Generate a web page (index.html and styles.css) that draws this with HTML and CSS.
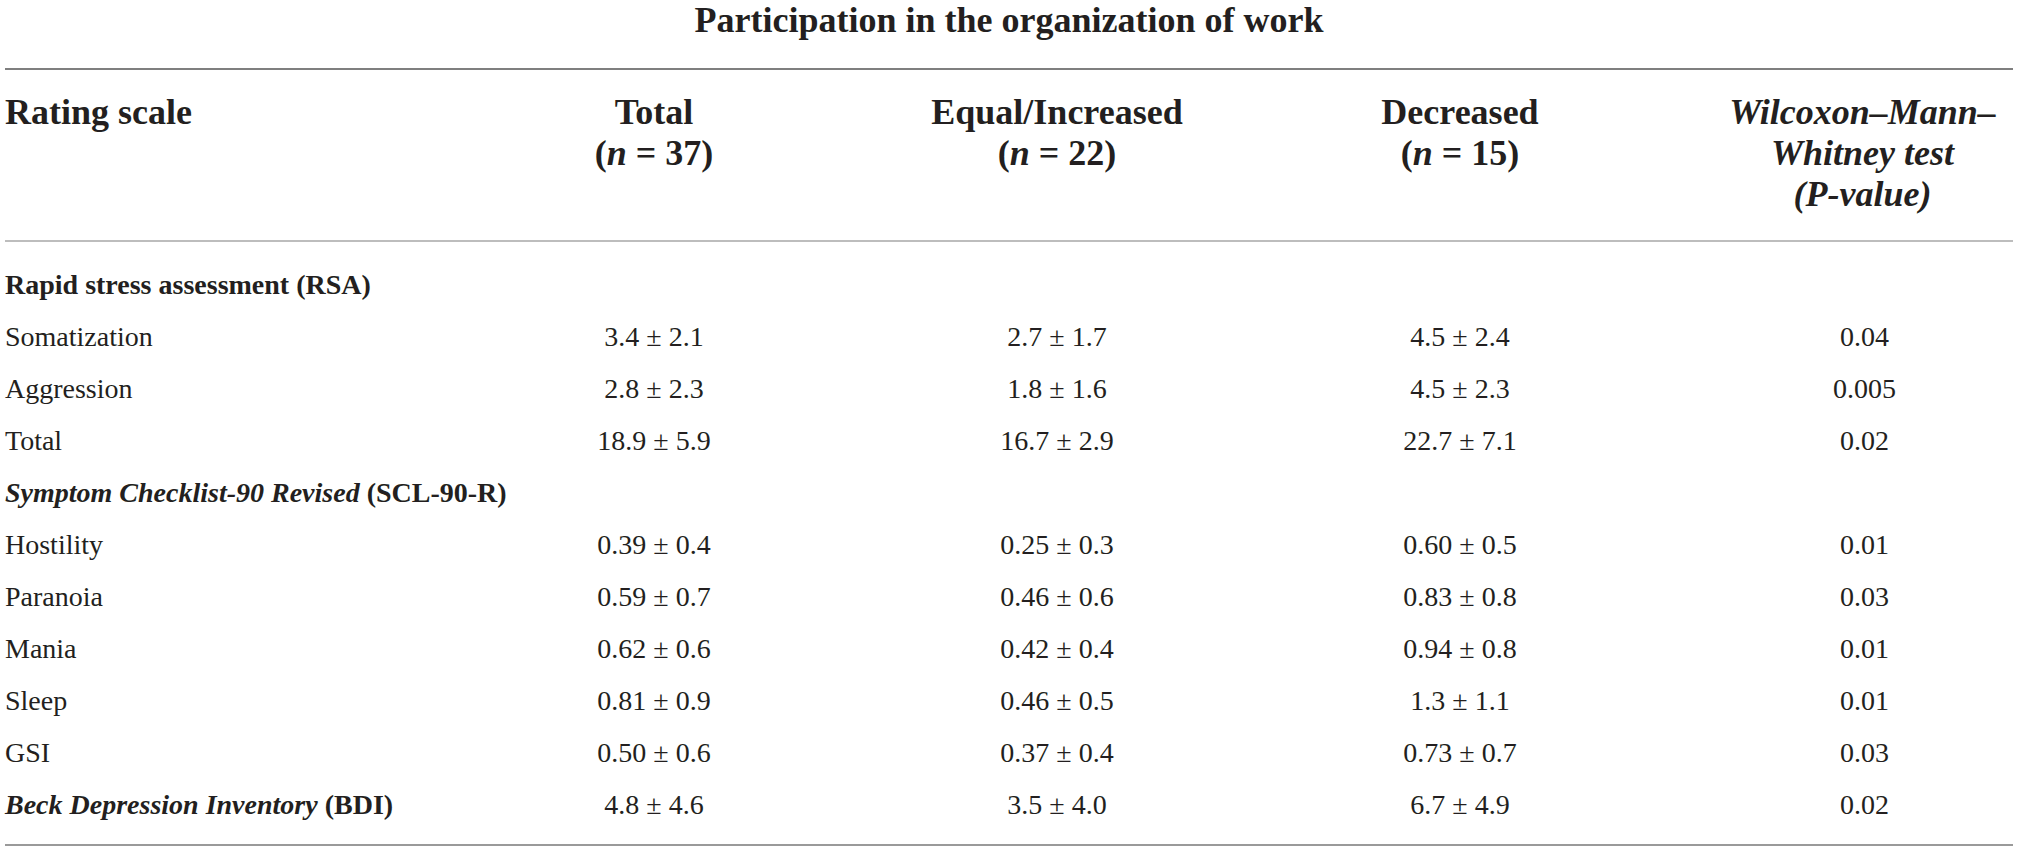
FILE: index.html
```html
<!DOCTYPE html>
<html>
<head>
    <title>Participation in the organization of work</title>
    <link rel="stylesheet" href="styles.css">
</head>
<body>

    <div class="page">
        <div class="caption">Participation in the organization of work</div>

        <table class="results">
            <colgroup>
                <col class="colLabel">
                <col class="colTotal">
                <col class="colEqual">
                <col class="colDecr">
                <col class="colTest">
            </colgroup>
            <thead>
                <tr>
                    <th class="leftAlign">Rating scale</th>
                    <th>Total<br>(<i>n</i> = 37)</th>
                    <th>Equal/Increased<br>(<i>n</i> = 22)</th>
                    <th>Decreased<br>(<i>n</i> = 15)</th>
                    <th class="testCol"><i>Wilcoxon–Mann–<br>Whitney test<br>(P-value)</i></th>
                </tr>
            </thead>
            <tbody>
                <tr class="firstRow">
                    <td class="section" colspan="5">Rapid stress assessment (RSA)</td>
                </tr>
                <tr>
                    <td>Somatization</td>
                    <td>3.4 ± 2.1</td>
                    <td>2.7 ± 1.7</td>
                    <td>4.5 ± 2.4</td>
                    <td class="testCol">0.04</td>
                </tr>
                <tr>
                    <td>Aggression</td>
                    <td>2.8 ± 2.3</td>
                    <td>1.8 ± 1.6</td>
                    <td>4.5 ± 2.3</td>
                    <td class="testCol">0.005</td>
                </tr>
                <tr>
                    <td>Total</td>
                    <td>18.9 ± 5.9</td>
                    <td>16.7 ± 2.9</td>
                    <td>22.7 ± 7.1</td>
                    <td class="testCol">0.02</td>
                </tr>
                <tr>
                    <td class="section" colspan="5"><i>Symptom Checklist-90 Revised</i> (SCL-90-R)</td>
                </tr>
                <tr>
                    <td>Hostility</td>
                    <td>0.39 ± 0.4</td>
                    <td>0.25 ± 0.3</td>
                    <td>0.60 ± 0.5</td>
                    <td class="testCol">0.01</td>
                </tr>
                <tr>
                    <td>Paranoia</td>
                    <td>0.59 ± 0.7</td>
                    <td>0.46 ± 0.6</td>
                    <td>0.83 ± 0.8</td>
                    <td class="testCol">0.03</td>
                </tr>
                <tr>
                    <td>Mania</td>
                    <td>0.62 ± 0.6</td>
                    <td>0.42 ± 0.4</td>
                    <td>0.94 ± 0.8</td>
                    <td class="testCol">0.01</td>
                </tr>
                <tr>
                    <td>Sleep</td>
                    <td>0.81 ± 0.9</td>
                    <td>0.46 ± 0.5</td>
                    <td>1.3 ± 1.1</td>
                    <td class="testCol">0.01</td>
                </tr>
                <tr>
                    <td>GSI</td>
                    <td>0.50 ± 0.6</td>
                    <td>0.37 ± 0.4</td>
                    <td>0.73 ± 0.7</td>
                    <td class="testCol">0.03</td>
                </tr>
                <tr class="lastRow">
                    <td class="section"><i>Beck Depression Inventory</i> (BDI)</td>
                    <td>4.8 ± 4.6</td>
                    <td>3.5 ± 4.0</td>
                    <td>6.7 ± 4.9</td>
                    <td class="testCol">0.02</td>
                </tr>
            </tbody>
        </table>
    </div>

</body>
</html>
```

FILE: styles.css
```css
body {
    margin: 0;
    background: #ffffff;
    color: #231f20;
    font-family: "Liberation Serif", "Times New Roman", serif;
}
.page {
    padding: 0 6px 0 5px;
}
.caption {
    font-size: 36px;
    line-height: 41px;
    font-weight: bold;
    text-align: center;
    margin: 0 0 27px 0;
}
.results {
    width: 100%;
    table-layout: fixed;
    border-collapse: separate;
    border-spacing: 0;
}
.colLabel { width: 447px; }
.colTotal { width: 404px; }
.colEqual { width: 402px; }
.colDecr { width: 404px; }
.colTest { width: 351px; }

th {
    font-size: 36px;
    line-height: 41px;
    font-weight: bold;
    text-align: center;
    vertical-align: top;
    padding: 22px 0 25px 0;
    border-top: 2px solid #7f7f7f;
    border-bottom: 2px solid #bdbdbd;
}
th i {
    font-style: italic;
}
td {
    font-size: 28px;
    line-height: 52px;
    text-align: center;
    padding: 0;
    white-space: nowrap;
}
.leftAlign,
td:first-child {
    text-align: left;
}
.testCol {
    padding-left: 54px;
}
th.testCol {
    padding-left: 50px;
}
.section {
    font-weight: bold;
}
.firstRow td {
    padding-top: 17px;
}
.lastRow td {
    padding-bottom: 13px;
    border-bottom: 2px solid #9a9a9a;
}
```
